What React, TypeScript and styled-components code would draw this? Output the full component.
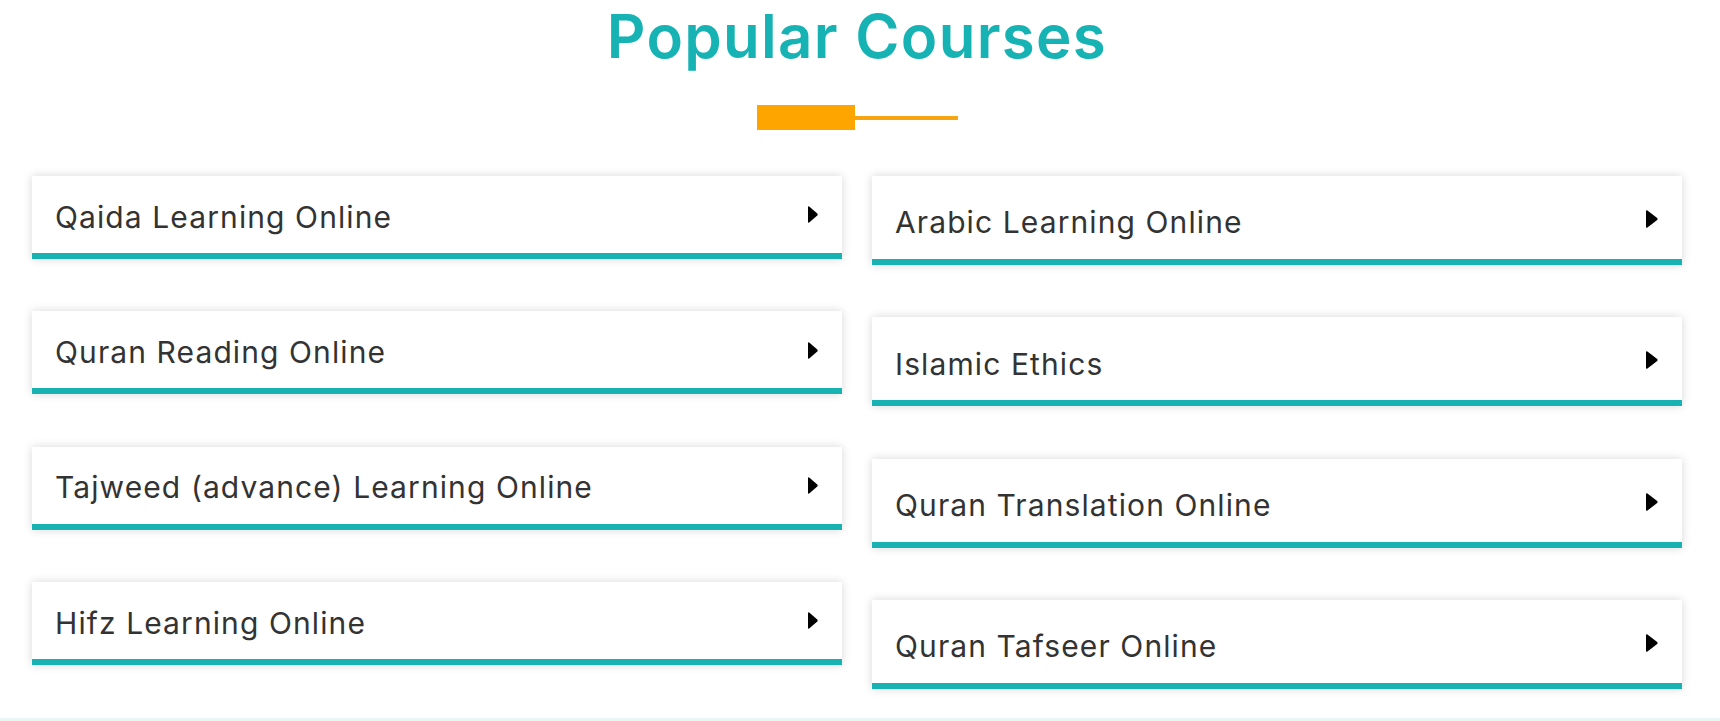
import React from "react";
import styled, { createGlobalStyle } from "styled-components";

const Global = createGlobalStyle`
  html, body {
    margin: 0;
    padding: 0;
    background: #ffffff;
  }
  body {
    font-family: "Inter", "Open Sans", sans-serif;
    overflow: hidden;
  }
`;

const Page = styled.div`
  display: flex;
  flex-direction: column;
  height: 721px;
  overflow: hidden;
`;

const Section = styled.section`
  padding: 0 38px 0 32px;
  display: flex;
  flex-direction: column;
  align-items: stretch;
`;

const Title = styled.h2`
  margin: 0;
  text-align: center;
  font-family: "Inter", sans-serif;
  font-weight: 600;
  font-size: 60px;
  line-height: 73px;
  letter-spacing: 1.3px;
  color: #17b3b4;
`;

const Divider = styled.div`
  margin-top: 32px;
  display: flex;
  justify-content: center;
  align-items: center;
`;

const DividerBlock = styled.span`
  width: 98px;
  height: 25px;
  background: #ffa500;
`;

const DividerLine = styled.span`
  width: 103px;
  height: 4px;
  background: #f5a511;
`;

const Grid = styled.div`
  margin-top: 46px;
  display: grid;
  grid-template-columns: 1fr 1fr;
  column-gap: 30px;
  align-items: start;
`;

const Column = styled.div`
  display: flex;
  flex-direction: column;
  gap: 52.3px;
`;

const Card = styled.a<{ $tall?: boolean }>`
  display: flex;
  align-items: flex-start;
  justify-content: space-between;
  box-sizing: border-box;
  height: ${(p) => (p.$tall ? 89 : 83)}px;
  padding: ${(p) => (p.$tall ? 29.3 : 23.8)}px 24px 0 23px;
  background: #ffffff;
  border-bottom: 6px solid #19b2b2;
  box-shadow: 0 0 9px rgba(0, 0, 0, 0.16);
  text-decoration: none;
  cursor: pointer;
`;

const Label = styled.span`
  font-family: "Inter", sans-serif;
  font-weight: 400;
  font-size: 30px;
  line-height: 34px;
  letter-spacing: 1.1px;
  color: #333333;
`;

const Caret = styled.svg<{ $tall?: boolean }>`
  width: ${(p) => (p.$tall ? 12 : 10)}px;
  height: ${(p) => (p.$tall ? 18 : 17)}px;
  margin-top: ${(p) => (p.$tall ? 4.7 : 6.7)}px;
  flex: none;
`;

const CaretIcon = ({ tall }: { tall?: boolean }) => (
  <Caret $tall={tall} viewBox="0 0 10 17" preserveAspectRatio="none">
    <path d="M1.2 0.4 L9.3 7.6 Q10 8.5 9.3 9.4 L1.2 16.6 Q0 17.4 0 15.8 L0 1.2 Q0 -0.4 1.2 0.4 Z" fill="#000" />
  </Caret>
);

const BottomBand = styled.div`
  margin-top: 29px;
  flex: 1;
  min-height: 3px;
  background: #e8f7f5;
`;

const left = [
  "Qaida Learning Online",
  "Quran Reading Online",
  "Tajweed (advance) Learning Online",
  "Hifz Learning Online",
];

const right = [
  "Arabic Learning Online",
  "Islamic Ethics",
  "Quran Translation Online",
  "Quran Tafseer Online",
];

export default function App() {
  return (
    <Page>
      <Global />
      <Section>
        <Title>Popular Courses</Title>
        <Divider>
          <DividerBlock />
          <DividerLine />
        </Divider>
        <Grid>
          <Column>
            {left.map((t) => (
              <Card key={t}>
                <Label>{t}</Label>
                <CaretIcon />
              </Card>
            ))}
          </Column>
          <Column>
            {right.map((t) => (
              <Card key={t} $tall>
                <Label>{t}</Label>
                <CaretIcon tall />
              </Card>
            ))}
          </Column>
        </Grid>
      </Section>
      <BottomBand />
    </Page>
  );
}
